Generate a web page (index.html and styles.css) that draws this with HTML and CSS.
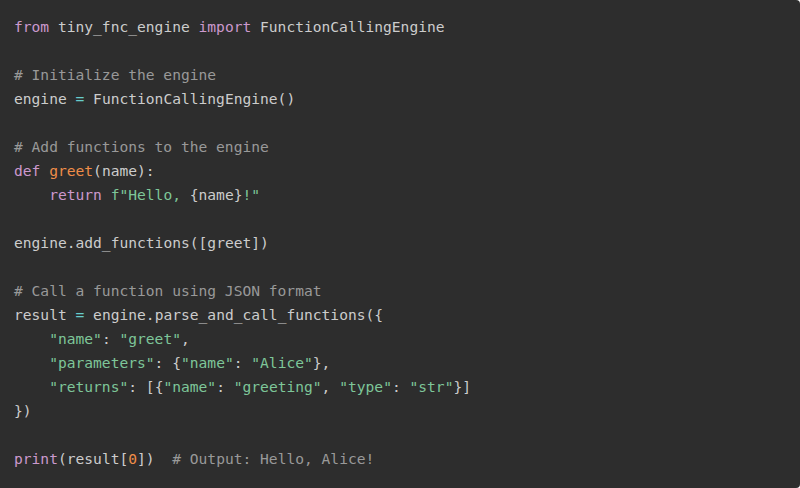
FILE: index.html
```html
<!DOCTYPE html>
<html lang="en">
<head>
<meta charset="utf-8">
<title>Code</title>
<link rel="stylesheet" href="styles.css">
</head>
<body>
<pre class="code"><code><span class="kw">from</span> tiny_fnc_engine <span class="kw">import</span> FunctionCallingEngine

<span class="cm"># Initialize the engine</span>
engine <span class="op">=</span> FunctionCallingEngine<span class="p">(</span><span class="p">)</span>

<span class="cm"># Add functions to the engine</span>
<span class="kw">def</span> <span class="fn">greet</span><span class="p">(</span>name<span class="p">)</span><span class="p">:</span>
    <span class="kw">return</span> <span class="st">f"Hello, </span><span class="p">{</span>name<span class="p">}</span><span class="st">!"</span>

engine<span class="p">.</span>add_functions<span class="p">(</span><span class="p">[</span>greet<span class="p">]</span><span class="p">)</span>

<span class="cm"># Call a function using JSON format</span>
result <span class="op">=</span> engine<span class="p">.</span>parse_and_call_functions<span class="p">(</span><span class="p">{</span>
    <span class="st">"name"</span><span class="p">:</span> <span class="st">"greet"</span><span class="p">,</span>
    <span class="st">"parameters"</span><span class="p">:</span> <span class="p">{</span><span class="st">"name"</span><span class="p">:</span> <span class="st">"Alice"</span><span class="p">}</span><span class="p">,</span>
    <span class="st">"returns"</span><span class="p">:</span> <span class="p">[</span><span class="p">{</span><span class="st">"name"</span><span class="p">:</span> <span class="st">"greeting"</span><span class="p">,</span> <span class="st">"type"</span><span class="p">:</span> <span class="st">"str"</span><span class="p">}</span><span class="p">]</span>
<span class="p">}</span><span class="p">)</span>

<span class="kw">print</span><span class="p">(</span>result<span class="p">[</span><span class="num">0</span><span class="p">]</span><span class="p">)</span>  <span class="cm"># Output: Hello, Alice!</span></code></pre>
</body>
</html>
```

FILE: styles.css
```css
html, body {
  margin: 0;
  padding: 0;
  background: #ffffff;
}

.code {
  margin: 0;
  width: 800px;
  height: 488px;
  box-sizing: border-box;
  padding: 15px 14px 17px 14px;
  background: #2d2d2d;
  border-radius: 0 4px 4px 0;
  color: #cccccc;
  font-family: "DejaVu Sans Mono", "Liberation Mono", monospace;
  font-size: 14.6px;
  line-height: 24px;
  white-space: pre;
  overflow: hidden;
}

.code code {
  font-family: inherit;
}

.kw { color: #cc99cd; }
.fn { color: #f08d49; }
.st { color: #7ec699; }
.cm { color: #999999; }
.num { color: #f08d49; }
.op { color: #67cdcc; }
.p { color: #cccccc; }
```
